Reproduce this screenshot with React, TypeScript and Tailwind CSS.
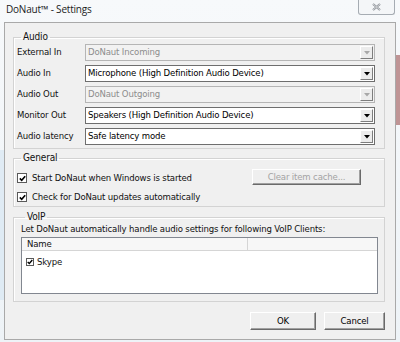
import React from "react";

const font = "font-['DejaVu_Sans_Condensed','Liberation_Sans',Arial,sans-serif]";

const Arrow = ({ disabled }: { disabled?: boolean }) => (
  <div className="mr-[1px] flex h-[13px] w-[13px] items-center justify-center border border-t-white border-l-white border-b-[#7d7d7d] border-r-[#7d7d7d] bg-[#ececec]">
    <svg width="6" height="4" viewBox="0 0 6 4">
      <path d="M0 0h6L3 3.5z" fill={disabled ? "#a8a8a8" : "#000"} />
    </svg>
  </div>
);

const Combo = ({ value, disabled }: { value: string; disabled?: boolean }) => (
  <div
    className={
      "flex h-[17px] w-[290px] items-center justify-between border pl-[2px] " +
      (disabled
        ? "border-[#b5b5b5] bg-[#f2f2f2] text-[#8d8d8d]"
        : "border-[#6e6e6e] bg-white text-black")
    }
  >
    <span>{value}</span>
    <Arrow disabled={disabled} />
  </div>
);

const Check = ({ small }: { small?: boolean }) => (
  <div
    className={
      "flex shrink-0 items-center justify-center border border-[#5a5a5a] bg-white " +
      (small ? "h-[8px] w-[8px]" : "h-[10px] w-[10px]")
    }
  >
    <svg width={small ? 6 : 7} height={small ? 6 : 7} viewBox="0 0 7 7">
      <path d="M0.8 3.4L2.7 5.3L6.2 1.2" stroke="#000" strokeWidth="1.6" fill="none" />
    </svg>
  </div>
);

const Button = ({ label, className, disabled }: { label: string; className: string; disabled?: boolean }) => (
  <div
    className={
      "flex items-center justify-center border border-t-white border-l-white border-b-[#6a6a6a] border-r-[#6a6a6a] bg-[#efefef] shadow-[inset_-1px_-1px_0_#a0a0a0] " +
      (disabled ? "text-[#a3a3a3] " : "text-black ") +
      className
    }
  >
    {label}
  </div>
);

const rows: { label: string; value: string; disabled?: boolean }[] = [
  { label: "External In", value: "DoNaut Incoming", disabled: true },
  { label: "Audio In", value: "Microphone (High Definition Audio Device)" },
  { label: "Audio Out", value: "DoNaut Outgoing", disabled: true },
  { label: "Monitor Out", value: "Speakers (High Definition Audio Device)" },
  { label: "Audio latency", value: "Safe latency mode" },
];

export default function App() {
  return (
    <div className={"relative h-[342px] w-[400px] overflow-hidden bg-gradient-to-b from-[#f7f9fb] to-[#eef3f7] text-[9.5px] tracking-[-0.15px] text-[#111] " + font}>
      {/* frame blur tint */}
      <div className="absolute right-0 top-[55px] h-[70px] w-[5px] bg-[#a86a6a] opacity-70" />
      <div className="absolute left-0 top-[150px] h-[150px] w-[4px] bg-[#dbe9f3] opacity-80" />

      <div className="flex h-[22px] items-start pl-[6px] pt-[4px] font-['Open_Sans',sans-serif] text-[10px] leading-none tracking-[-0.2px] text-[#1b1b1b]">
        DoNaut™ - Settings
      </div>
      <div className="absolute right-[5px] top-0 flex h-[15px] w-[37px] items-center justify-center rounded-b-[3px] border border-t-0 border-[#a6acb3] bg-[#f4f6f8]">
        <svg width="9" height="8" viewBox="0 0 9 8">
          <path d="M1 1L8 7M8 1L1 7" stroke="#8a8f96" strokeWidth="2" />
          <path d="M1 1L8 7M8 1L1 7" stroke="#fff" strokeWidth="0.6" />
        </svg>
      </div>

      <div className="relative mx-[4px] flex h-[318px] flex-col border border-[#a9a9a9] bg-[#f0f0f0] pl-[8px] pr-[10px] pt-[8px]">
        <fieldset className="h-[118px] border border-[#d3d3d3] pl-[3px] shadow-[inset_1px_1px_0_#fff]">
          <legend className="ml-[4px] px-[2px] text-[10px] leading-[12px]">Audio</legend>
          <div className="mt-[1px] flex flex-col gap-[4px]">
            {rows.map((r) => (
              <div key={r.label} className="flex items-center">
                <span className="w-[68px]">{r.label}</span>
                <Combo value={r.value} disabled={r.disabled} />
              </div>
            ))}
          </div>
        </fieldset>

        <fieldset className="mt-[3px] h-[55px] border border-[#d3d3d3] pl-[3px] shadow-[inset_1px_1px_0_#fff]">
          <legend className="ml-[4px] px-[2px] text-[10px] leading-[12px]">General</legend>
          <div className="flex items-start justify-between pr-[23px]">
            <div className="mt-[8px] flex flex-col gap-[7px]">
              <div className="flex h-[12px] items-center gap-[5px]">
                <Check />
                <span>Start DoNaut when Windows is started</span>
              </div>
              <div className="flex h-[12px] items-center gap-[5px]">
                <Check />
                <span>Check for DoNaut updates automatically</span>
              </div>
            </div>
            <Button label="Clear item cache..." disabled className="mt-[5px] h-[16px] w-[109px]" />
          </div>
        </fieldset>

        <fieldset className="mt-[4px] h-[91px] border border-[#d3d3d3] pl-[7px] pr-[6px] shadow-[inset_1px_1px_0_#fff]">
          <legend className="ml-[4px] px-[2px] text-[10px] leading-[12px]">VoIP</legend>
          <div className="leading-[12px]">Let DoNaut automatically handle audio settings for following VoIP Clients:</div>
          <div className="mt-[2px] flex h-[57px] flex-col border border-[#828790] bg-white">
            <div className="flex h-[13px] border-b border-[#d5d5d5] bg-[#f7f7f7] leading-[12px]">
              <div className="w-[226px] border-r border-[#d5d5d5] pl-[5px]">Name</div>
              <div className="flex-1" />
            </div>
            <div className="mt-[4px] flex items-center gap-[3px] pl-[4px]">
              <Check small />
              <span>Skype</span>
            </div>
          </div>
        </fieldset>

        <div className="mt-[10px] flex justify-end gap-[8px]">
          <Button label="OK" className="h-[18px] w-[66px]" />
          <Button label="Cancel" className="h-[18px] w-[61px]" />
        </div>
      </div>
    </div>
  );
}
